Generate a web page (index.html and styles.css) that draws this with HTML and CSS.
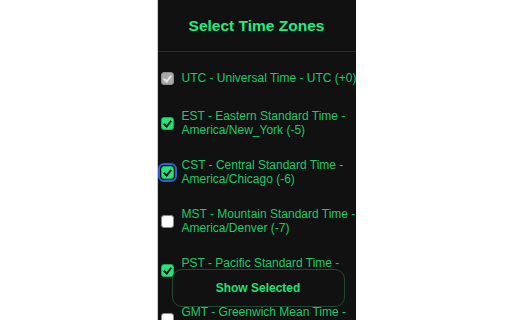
FILE: index.html
```html
<!DOCTYPE html>
<html lang="en">
<head>
  <meta charset="UTF-8" />
  <title>Select Time Zones</title>
  <link rel="stylesheet" href="styles.css">
</head>
<body>
  <div class="popup">
    <h1>Select Time Zones</h1>

    <div class="zone-list">
      <label class="zone single">
        <input type="checkbox" checked disabled>
        <span>UTC - Universal Time - UTC (+0)</span>
      </label>
      <label class="zone">
        <input type="checkbox" checked>
        <span>EST - Eastern Standard Time - America/New_York (-5)</span>
      </label>
      <label class="zone">
        <input type="checkbox" class="focused" checked>
        <span>CST - Central Standard Time - America/Chicago (-6)</span>
      </label>
      <label class="zone">
        <input type="checkbox">
        <span>MST - Mountain Standard Time - America/Denver (-7)</span>
      </label>
      <label class="zone">
        <input type="checkbox" checked>
        <span>PST - Pacific Standard Time - America/Los_Angeles (-8)</span>
      </label>
      <label class="zone">
        <input type="checkbox">
        <span>GMT - Greenwich Mean Time - Europe/London (+0)</span>
      </label>
    </div>

    <button class="show-btn">Show Selected</button>
  </div>
</body>
</html>
```

FILE: styles.css
```css
* {
  box-sizing: border-box;
}

html, body {
  margin: 0;
  padding: 0;
  height: 100%;
  background-color: white;
  font-family: "Liberation Sans", Arial, sans-serif;
}

body {
  display: flex;
  justify-content: center;
  overflow: hidden;
}

.popup {
  position: relative;
  width: 199px;
  height: 100%;
  background-color: #111111;
  border-left: 1px solid #c8c8c8;
  overflow: hidden;
}

h1 {
  margin: 0;
  height: 52px;
  padding-top: 17px;
  text-align: center;
  font-size: 15.5px;
  font-weight: bold;
  color: #22ec80;
  border-bottom: 1px solid #1f3328;
}

.zone-list {
  display: flex;
  flex-direction: column;
  gap: 21px;
  width: calc(100% + 8px);
  padding: 19px 0 0 3px;
}

.zone {
  display: flex;
  align-items: center;
  gap: 8px;
  font-size: 12px;
  line-height: 14px;
  color: #1fc86a;
}

.zone.single {
  margin-bottom: 3px;
}

.zone span {
  flex: 1;
  padding-right: 8px;
}

.zone.single span {
  white-space: nowrap;
}

.zone input {
  appearance: none;
  -webkit-appearance: none;
  flex: none;
  width: 13px;
  height: 13px;
  margin: 0;
  border-radius: 3px;
  background: #ffffff;
  border: 1px solid #8a8a8a;
  position: relative;
}

.zone input:checked {
  background: #22e67c;
  border-color: #1aa85a;
}

.zone input:checked::after {
  content: "";
  position: absolute;
  left: 3.5px;
  top: 1px;
  width: 3px;
  height: 6px;
  border: solid #111;
  border-width: 0 2px 2px 0;
  transform: rotate(40deg);
}

.zone input:disabled {
  background: #a8a8a8;
  border-color: #8c8c8c;
}

.zone input:disabled::after {
  border-color: #e4e4e4;
}

.zone input.focused {
  outline: 2px solid #2f5fd0;
  outline-offset: 1px;
}

.show-btn {
  position: absolute;
  left: 14px;
  right: 11px;
  bottom: 13px;
  height: 38px;
  background-color: #111111;
  border: 1px solid #1f4a32;
  border-radius: 10px;
  color: #22e07c;
  font-family: "Liberation Sans", Arial, sans-serif;
  font-size: 12px;
  font-weight: bold;
  cursor: pointer;
}
```
